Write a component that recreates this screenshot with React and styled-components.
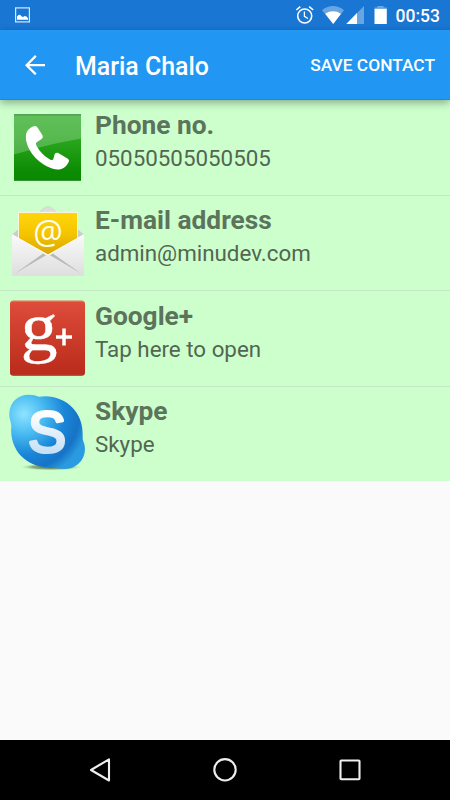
import React from 'react'
import styled, { createGlobalStyle } from 'styled-components'

const GlobalStyle = createGlobalStyle`
    body {
        margin: 0;
        background: #fafafa;
        font-family: Roboto, sans-serif;
    }
`

const Screen = styled.div`
    display: flex;
    flex-direction: column;
    width: 450px;
    height: 800px;
    overflow: hidden;
    background: #fafafa;
`

const StatusBar = styled.div`
    display: flex;
    align-items: center;
    justify-content: space-between;
    height: 30px;
    flex: none;
    padding: 0 10px 0 15px;
    box-sizing: border-box;
    background: #1976d2;
    color: #fff;
`

const StatusIcons = styled.div`
    display: flex;
    align-items: center;
    gap: 9px;
`

const Clock = styled.span`
    font-size: 17.5px;
    font-weight: 500;
    line-height: 30px;
    padding-top: 2px;
`

const Toolbar = styled.header`
    display: flex;
    align-items: center;
    height: 70px;
    flex: none;
    padding: 0 15px 0 25px;
    box-sizing: border-box;
    background: #2196f3;
    border-bottom: 1px solid #1e88dc;
    color: #fff;
    position: relative;
    z-index: 1;
    box-shadow: 0 3px 8px rgba(0, 0, 0, 0.32);
`

const ToolbarTitle = styled.h1`
    flex: 1;
    margin: 4px 0 0 30px;
    font-size: 24.9px;
    font-weight: 500;
    line-height: 30px;
`

const SaveButton = styled.button`
    padding: 1px 0 0;
    border: none;
    background: none;
    color: inherit;
    font: 500 17.35px Roboto, sans-serif;
    text-transform: uppercase;
    white-space: nowrap;
`

const List = styled.ul`
    flex: 1;
    margin: 0;
    padding: 0;
    list-style: none;
`

const Row = styled.li`
    display: flex;
    gap: 10px;
    height: 95.2px;
    background: #ccffcc;
    box-shadow: ${props => props.$first ? 'none' : 'inset 0 1px #c6e6c8'};
`

const RowIcon = styled.svg`
    flex: none;
    width: 85px;
    height: 95px;
    overflow: visible;
`

const RowText = styled.div`
    padding-top: 10.2px;
`

const Label = styled.div`
    font-size: 26.3px;
    font-weight: 700;
    line-height: 31px;
    color: #5c735c;
`

const Value = styled.div`
    margin-top: 2px;
    font-size: 22.35px;
    line-height: 30px;
    color: #526652;
`

const NavBar = styled.nav`
    display: flex;
    justify-content: space-between;
    align-items: center;
    height: 60px;
    flex: none;
    padding: 0 85px;
    box-sizing: border-box;
    background: #000;
`

function PhoneIcon() {
    return (
        <RowIcon viewBox="0 0 85 95">
            <defs>
                <linearGradient id="phoneBg" x1="0" y1="0" x2="0" y2="1">
                    <stop offset="0" stopColor="#35ae2c" />
                    <stop offset="0.4" stopColor="#27a51d" />
                    <stop offset="0.85" stopColor="#0c8c04" />
                    <stop offset="1" stopColor="#088a00" />
                </linearGradient>
            </defs>
            <rect x="14" y="14.3" width="67" height="66.4" fill="url(#phoneBg)" />
            <path d="M14 14.3H81V38.5C56 43 36 48 14 54.5Z" fill="#fff" opacity="0.22" />
            <path d="M14 14.8H81M14 80.2H81" stroke="#20722a" opacity="0.65" />
            <path d="M26 35C26.5 31 30 27 34.8 26.1C36.3 25.8 37.2 27 38 28.3L42.3 35C43.3 36.7 42.8 38 41.6 39L36.7 42.2C35.5 43.1 36 44.6 36.8 46.2C39.8 51.6 43.5 55.4 48.8 58.7C50.4 59.7 52.5 60.8 53.3 59.2L54.4 55C55 53 56.3 52.5 58.2 53.1L67.5 58.4C69.4 59.5 69.3 61 68.4 62.6C66 67.4 61.8 69.9 57.4 69.6C46 68.4 32 58.2 27.4 45C26.2 41.6 25.6 38.2 26 35Z" fill="#fff" />
        </RowIcon>
    )
}

function MailIcon() {
    return (
        <RowIcon viewBox="0 0 85 95">
            <defs>
                <linearGradient id="mailSheet" x1="0" y1="0" x2="0" y2="1">
                    <stop offset="0" stopColor="#ffd60a" />
                    <stop offset="0.45" stopColor="#f5c400" />
                    <stop offset="1" stopColor="#d3a000" />
                </linearGradient>
                <linearGradient id="mailFront" x1="0" y1="0" x2="0" y2="1">
                    <stop offset="0" stopColor="#fafafa" />
                    <stop offset="1" stopColor="#dedede" />
                </linearGradient>
            </defs>
            <path d="M12 39.5L44 13Q48 9.5 52 13L84 39.5V60H12Z" fill="#cdcdcd" />
            <path d="M41 17L45 12.8Q48 10.5 51 12.8L56 17Z" fill="#dadfdc" />
            <path d="M18 16.7H78V50L48 64L18 50Z" fill="#f8f4df" />
            <path d="M19 18H77V50L48 64.5L19 50Z" fill="url(#mailSheet)" />
            <path d="M12 39.5L48 59.5L84 39.5V81H12Z" fill="url(#mailFront)" />
            <path d="M15 78.5L43 58.6L46 60.2ZM81 78.5L53 58.6L50 60.2Z" fill="#b9b9b9" />
            <path d="M12 39.5L48 60L84 39.5" fill="none" stroke="#fff" strokeWidth="0.8" />
            <text x="48" y="49" textAnchor="middle" fontFamily="Open Sans" fontSize="33" fill="#fffdf0">@</text>
        </RowIcon>
    )
}

function GooglePlusIcon() {
    return (
        <RowIcon viewBox="0 0 85 95">
            <defs>
                <linearGradient id="plusBg" x1="0" y1="0" x2="0" y2="1">
                    <stop offset="0" stopColor="#de4c3a" />
                    <stop offset="1" stopColor="#b92b1b" />
                </linearGradient>
            </defs>
            <rect x="10" y="11.3" width="75" height="74.5" rx="3.5" fill="#85351f" />
            <rect x="10" y="10.6" width="75" height="74" rx="3.5" fill="#ea6a58" />
            <rect x="10" y="12" width="75" height="72.8" rx="3" fill="url(#plusBg)" />
            <text transform="translate(20.7 59.6) scale(1.1 1)" fontFamily="Liberation Serif" fontSize="67" fill="#fff" stroke="#fff" strokeWidth="0.4">g</text>
            <path d="M56 47H72M64 38.6V55.4" stroke="#fff" strokeWidth="3.5" />
        </RowIcon>
    )
}

function SkypeIcon() {
    return (
        <RowIcon viewBox="0 0 85 95">
            <defs>
                <radialGradient id="skypeBg" gradientUnits="userSpaceOnUse" cx="24" cy="28" r="65">
                    <stop offset="0" stopColor="#8fe4ff" />
                    <stop offset="0.3" stopColor="#4bbcf2" />
                    <stop offset="0.62" stopColor="#1a86d8" />
                    <stop offset="0.85" stopColor="#1673c6" />
                    <stop offset="1" stopColor="#2a9be0" />
                </radialGradient>
                <linearGradient id="skypeS" x1="0" y1="0" x2="0" y2="1">
                    <stop offset="0.2" stopColor="#fff" />
                    <stop offset="1" stopColor="#b5d6f3" />
                </linearGradient>
                <radialGradient id="skypeShadow">
                    <stop offset="0" stopColor="#35502e" stopOpacity="0.85" />
                    <stop offset="0.6" stopColor="#45603a" stopOpacity="0.5" />
                    <stop offset="1" stopColor="#ccffcc" stopOpacity="0" />
                </radialGradient>
            </defs>
            <ellipse cx="51" cy="81" rx="32" ry="3.6" fill="url(#skypeShadow)" />
            <path d="M9.3 27C10 15 19 8.5 29 8.7C33 8.8 36 9.6 39 10.7C62 7 84 24 82.7 50C82.5 53 83 54.5 84 57C88 70 79 83 64 83C59.5 83 57 82.3 53.5 81C29 83.5 9 66 11.3 40C11.2 36 9 33 9.3 27Z" fill="url(#skypeBg)" />
            <text x="47" y="66.2" textAnchor="middle" fontFamily="Liberation Sans" fontSize="57" fill="url(#skypeS)" stroke="url(#skypeS)" strokeWidth="3.2" strokeLinejoin="round">S</text>
        </RowIcon>
    )
}

const contacts = [
    { label: 'Phone no.', value: '05050505050505', Icon: PhoneIcon },
    { label: 'E-mail address', value: 'admin@minudev.com', Icon: MailIcon },
    { label: 'Google+', value: 'Tap here to open', Icon: GooglePlusIcon },
    { label: 'Skype', value: 'Skype', Icon: SkypeIcon },
]

function App() {
    return (
        <Screen>
            <GlobalStyle />
            <StatusBar>
                <svg width="15" height="16" viewBox="0 0 15 16">
                    <rect x="0.6" y="0.9" width="13.8" height="14" fill="none" stroke="#d9e8f8" strokeWidth="1.2" />
                    <path d="M2 12.8V9.5L3.5 8L5 7.7L6.5 9.3L8 10L9.7 9L11.5 9.4L13 11.2V12.8Z" fill="#fff" />
                </svg>
                <StatusIcons>
                    <svg width="91" height="30" viewBox="296 0 91 30">
                        <circle cx="304.7" cy="16" r="7" fill="none" stroke="#fff" strokeWidth="1.6" />
                        <path d="M304.4 11.5V16.3L308 18.5" fill="none" stroke="#fff" strokeWidth="1.3" />
                        <path d="M296.3 10L300.3 6.6M313.2 10L309.2 6.6" stroke="#fff" strokeWidth="1.6" />
                        <path d="M322 10.2Q333 2 344 10.2L333.2 24Z" fill="#fff" opacity="0.35" />
                        <path d="M325.2 13.7Q333 8.8 341 13.7L333.2 24Z" fill="#fff" />
                        <path d="M346.3 24L364 6V24Z" fill="#fff" opacity="0.35" />
                        <path d="M346.3 24L357 13V24Z" fill="#fff" />
                        <path d="M374.5 8.8V7.6H377.3V6H383.6V7.6H386.8V8.8Z" fill="#fff" opacity="0.35" />
                        <rect x="374.5" y="8.8" width="12.3" height="15.2" fill="#fff" />
                    </svg>
                    <Clock>00:53</Clock>
                </StatusIcons>
            </StatusBar>
            <Toolbar>
                <svg width="20" height="20" viewBox="0 0 20 20">
                    <path d="M20 10.2H2M10.8 0.9L1.6 10.2L10.8 19.3" fill="none" stroke="#fff" strokeWidth="2.3" />
                </svg>
                <ToolbarTitle>Maria Chalo</ToolbarTitle>
                <SaveButton>Save contact</SaveButton>
            </Toolbar>
            <List>
                {contacts.map(({ label, value, Icon }, i) => (
                    <Row key={label} $first={i === 0}>
                        <Icon />
                        <RowText>
                            <Label>{label}</Label>
                            <Value>{value}</Value>
                        </RowText>
                    </Row>
                ))}
            </List>
            <NavBar>
                <svg width="30" height="30" viewBox="85 755 30 30">
                    <path d="M109 759.3V780.5L91 770Z" fill="none" stroke="#eee" strokeWidth="2.1" strokeLinejoin="round" />
                </svg>
                <svg width="30" height="30" viewBox="0 0 30 30">
                    <circle cx="15" cy="14.8" r="10.7" fill="none" stroke="#eee" strokeWidth="2.1" />
                </svg>
                <svg width="30" height="30" viewBox="335 755 30 30">
                    <rect x="340.5" y="760.5" width="19" height="18.8" rx="0.7" fill="none" stroke="#eee" strokeWidth="2.1" />
                </svg>
            </NavBar>
        </Screen>
    )
}

export default App
